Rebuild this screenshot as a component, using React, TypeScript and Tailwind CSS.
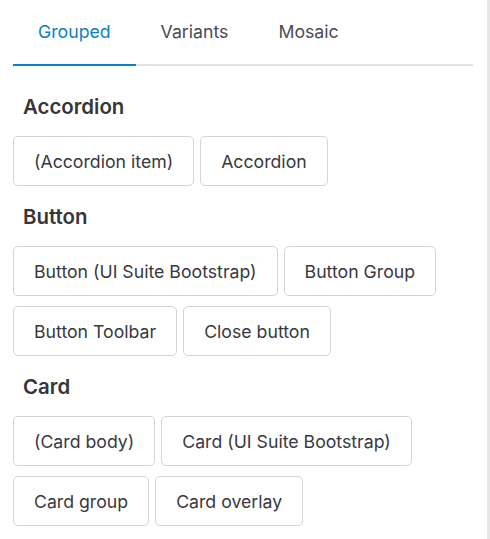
const groups: Array<{ title: string; items: string[] }> = [
  { title: 'Accordion', items: ['(Accordion item)', 'Accordion'] },
  { title: 'Button', items: ['Button (UI Suite Bootstrap)', 'Button Group', 'Button Toolbar', 'Close button'] },
  { title: 'Card', items: ['(Card body)', 'Card (UI Suite Bootstrap)', 'Card group', 'Card overlay'] },
]

const tabs = ['Grouped', 'Variants', 'Mosaic']

export default function App() {
  return (
    <div className="flex min-h-screen bg-white font-['Inter',_'Liberation_Sans',_sans-serif]">
      <div className="flex-1 pl-[13px] pr-[14px]">
        {/* tabs */}
        <div className="flex border-b-2 border-[#e3e3e3]">
          {tabs.map((t, i) => (
            <button
              key={t}
              className={`-mb-[2px] px-[25px] pt-[20px] pb-[20px] text-[17.7px] leading-6 border-b-2 ${
                i === 0 ? 'border-[#0a80c4] text-[#0a80c4]' : 'border-transparent text-[#4b4b55]'
              }`}
            >
              {t}
            </button>
          ))}
        </div>

        <div className="pt-[29px]">
          {groups.map((g, gi) => (
            <section key={g.title} className={gi > 0 ? 'mt-[19px]' : ''}>
              <h2 className="pl-[10px] text-[20.4px] leading-6 font-semibold text-[#35353b]">{g.title}</h2>
              <div className="mt-[17px] flex flex-wrap gap-x-[6px] gap-y-[10px]">
                {g.items.map(item => (
                  <button
                    key={item}
                    className="h-[50px] px-5 pt-[2px] rounded-[5px] border border-[#d4d4d6] text-[17.7px] leading-6 text-[#38383e]"
                  >
                    {item}
                  </button>
                ))}
              </div>
            </section>
          ))}
        </div>
      </div>
      <div className="w-[3px] bg-[#e6e6e6]" />
    </div>
  )
}
